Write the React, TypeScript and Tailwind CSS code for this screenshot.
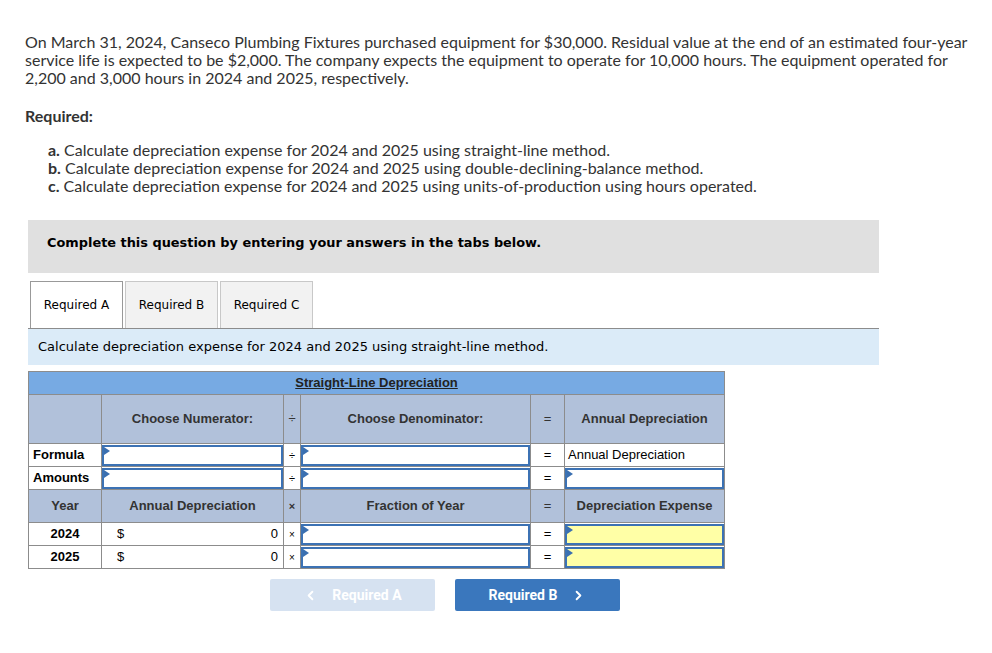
import React from "react";
import { ChevronLeft, ChevronRight } from "lucide-react";

const body = { fontFamily: "Lato, 'Open Sans', sans-serif" };
const verdana = { fontFamily: "'DejaVu Sans', Verdana, sans-serif" };
const arial = { fontFamily: "'Liberation Sans', Arial, sans-serif" };

const Marker = () => (
  <span className="absolute left-0 top-0 w-0 h-0 border-t-[4px] border-b-[4px] border-l-[6px] border-t-transparent border-b-transparent border-l-[#3a6fb0]" />
);

const Input = ({ yellow }: { yellow?: boolean }) => (
  <div className={`relative h-[21px] border-2 border-[#3c72b4] ${yellow ? "bg-[#ffffa6]" : "bg-white"}`}>
    <Marker />
  </div>
);

const td = "border border-[#8c8c8c] p-0";
const hd = "border border-[#8c8c8c] bg-[#b1c1da] font-bold text-[#333] text-center";

export default function App() {
  return (
    <div className="bg-white min-h-[653px] pt-[33px] text-[#333]">
      <div className="pl-[25px] text-[16px] leading-[18px] whitespace-nowrap" style={body}>
        <p>
          On March 31, 2024, Canseco Plumbing Fixtures purchased equipment for $30,000. Residual value at the end of an estimated four-year
          <br />
          service life is expected to be $2,000. The company expects the equipment to operate for 10,000 hours. The equipment operated for
          <br />
          2,200 and 3,000 hours in 2024 and 2025, respectively.
        </p>
        <p className="font-bold mt-[20px]">Required:</p>
        <div className="mt-[16px] pl-[23px]">
          <p><b>a.</b> Calculate depreciation expense for 2024 and 2025 using straight-line method.</p>
          <p><b>b.</b> Calculate depreciation expense for 2024 and 2025 using double-declining-balance method.</p>
          <p><b>c.</b> Calculate depreciation expense for 2024 and 2025 using units-of-production using hours operated.</p>
        </div>
      </div>

      <div className="ml-[28px] w-[851px] mt-[25px]">
        <div className="h-[53px] bg-[#e0e0e0] flex items-center pb-[8px] pl-[19px] text-[12.9px] font-bold text-black" style={verdana}>
          Complete this question by entering your answers in the tabs below.
        </div>

        <div className="mt-[8px] flex gap-[2px] border-b border-[#8c8c8c] pl-[2px] text-[12px] text-black" style={verdana}>
          <div className="w-[93px] h-[47px] flex items-center justify-center bg-white border border-b-0 border-[#999] -mb-px">Required A</div>
          <div className="w-[93px] h-[47px] flex items-center justify-center bg-[#f2f2f2] border border-b-0 border-[#c8c8c8]">Required B</div>
          <div className="w-[93px] h-[47px] flex items-center justify-center bg-[#f2f2f2] border border-b-0 border-[#c8c8c8]">Required C</div>
        </div>

        <div className="h-[36px] bg-[#dbebf8] flex items-center pl-[10px] text-[13px] text-black" style={verdana}>
          Calculate depreciation expense for 2024 and 2025 using straight-line method.
        </div>

        <table className="mt-[6px] border-collapse table-fixed w-[696px] text-[13px] text-black" style={arial}>
          <colgroup>
            <col className="w-[73px]" />
            <col className="w-[182px]" />
            <col className="w-[17px]" />
            <col className="w-[230px]" />
            <col className="w-[34px]" />
            <col className="w-[160px]" />
          </colgroup>
          <tbody>
            <tr className="h-[23px]">
              <td colSpan={6} className="border border-[#8c8c8c] bg-[#77aae3] text-center font-bold underline text-[#222]">
                Straight-Line Depreciation
              </td>
            </tr>
            <tr className="h-[49px]">
              <td className={hd}></td>
              <td className={hd}>Choose Numerator:</td>
              <td className={`${hd} font-normal`}>÷</td>
              <td className={hd}>Choose Denominator:</td>
              <td className={`${hd} font-normal`}>=</td>
              <td className={hd}>Annual Depreciation</td>
            </tr>
            <tr className="h-[23px]">
              <td className={`${td} pl-[4px] font-bold`}>Formula</td>
              <td className={td}><Input /></td>
              <td className={`${td} text-center text-[11px]`}>÷</td>
              <td className={td}><Input /></td>
              <td className={`${td} text-center`}>=</td>
              <td className={`${td} pl-[3px]`}>Annual Depreciation</td>
            </tr>
            <tr className="h-[23px]">
              <td className={`${td} pl-[4px] font-bold`}>Amounts</td>
              <td className={td}><Input /></td>
              <td className={`${td} text-center text-[11px]`}>÷</td>
              <td className={td}><Input /></td>
              <td className={`${td} text-center`}>=</td>
              <td className={td}><Input /></td>
            </tr>
            <tr className="h-[33px]">
              <td className={hd}>Year</td>
              <td className={hd}>Annual Depreciation</td>
              <td className={`${hd} text-[11px]`}>×</td>
              <td className={hd}>Fraction of Year</td>
              <td className={`${hd} font-normal`}>=</td>
              <td className={hd}>Depreciation Expense</td>
            </tr>
            {["2024", "2025"].map((y) => (
              <tr key={y} className="h-[23px]">
                <td className={`${td} text-center font-bold`}>{y}</td>
                <td className={`${td} px-[5px]`}>
                  <div className="flex justify-between pl-[10px]">
                    <span>$</span>
                    <span>0</span>
                  </div>
                </td>
                <td className={`${td} text-center text-[10px]`}>×</td>
                <td className={td}><Input /></td>
                <td className={`${td} text-center`}>=</td>
                <td className={td}><Input yellow /></td>
              </tr>
            ))}
          </tbody>
        </table>

        <div className="mt-[10px] ml-[242px] flex gap-[20px] text-[14px] font-bold text-white" style={{ fontFamily: "Roboto, sans-serif" }}>
          <div className="w-[165px] h-[32px] rounded-[2px] bg-[#d6e2f1] flex items-center justify-center gap-[14px]">
            <ChevronLeft size={15} strokeWidth={3} />
            <span>Required A</span>
          </div>
          <div className="w-[165px] h-[32px] rounded-[2px] bg-[#3a77bd] flex items-center justify-center gap-[14px]">
            <span>Required B</span>
            <ChevronRight size={15} strokeWidth={3} />
          </div>
        </div>
      </div>
    </div>
  );
}
